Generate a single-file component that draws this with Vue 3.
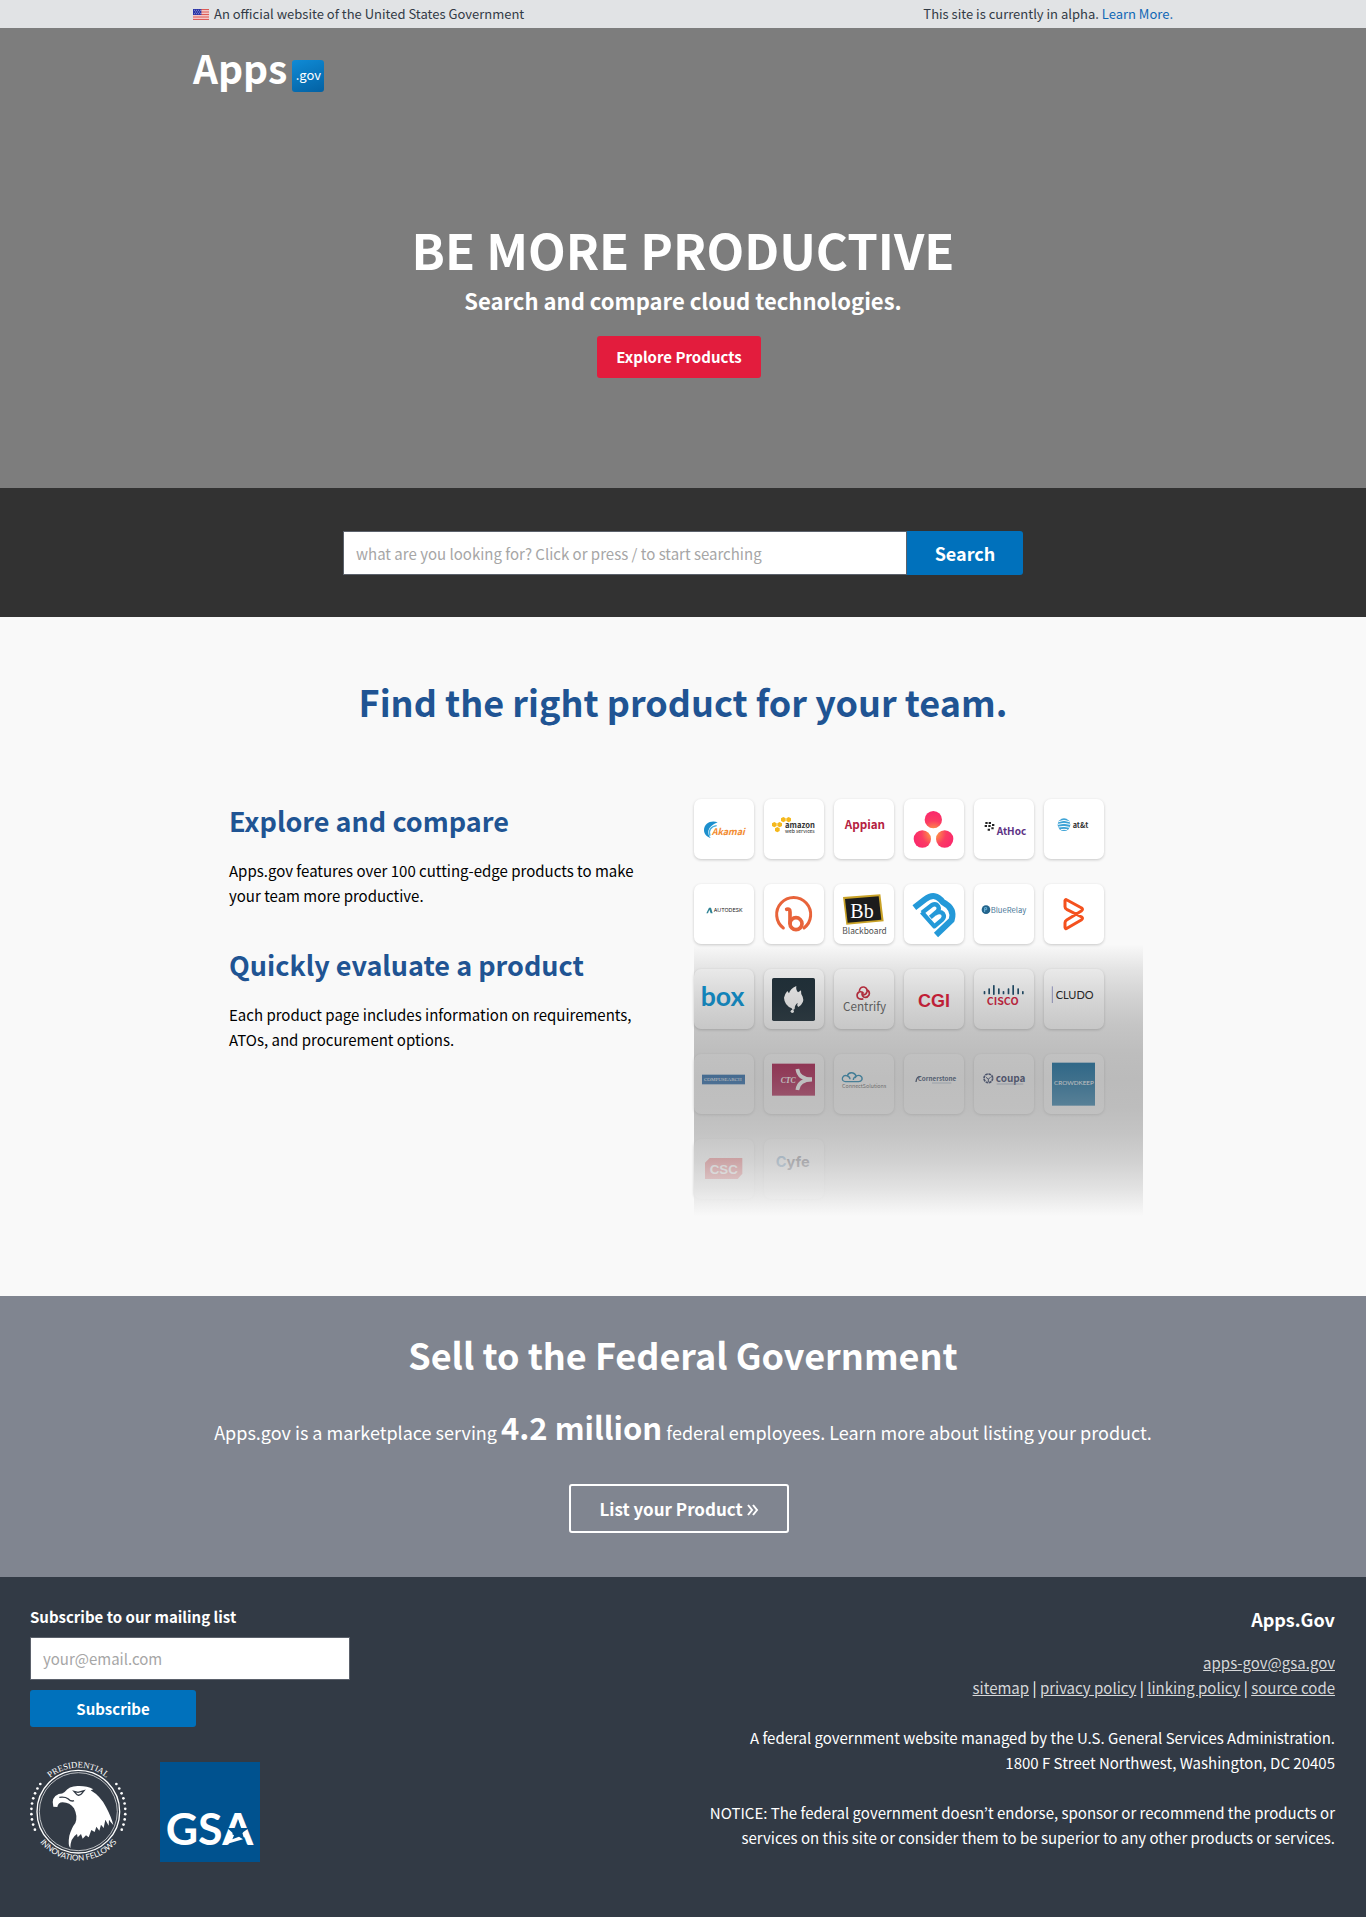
<script setup>
import { ref } from 'vue'

const query = ref('')
const email = ref('')

// Ring of dots on both sides of the fellows seal, in seal units.
const dots = []
for (const side of [-1, 1]) {
  for (let i = 0; i < 10; i++) {
    const a = ((-36 + i * 6.5) * Math.PI) / 180
    dots.push({ x: 235 + side * 141 * Math.cos(a), y: 665 + 141 * Math.sin(a) })
  }
}
const ciscoBars = [
  [31, 66, 10], [45, 58, 18], [59, 48, 30], [74, 58, 18], [88, 66, 10],
  [103, 58, 18], [117, 48, 30], [132, 58, 18], [146, 66, 10],
]
</script>

<template>
  <div class="page">
    <div class="banner">
      <div class="wrap banner-row">
        <span class="official">
          <svg class="flag" viewBox="0 0 48 33" aria-hidden="true">
            <rect width="48" height="33" fill="#fff" />
            <path d="M0 1.5h48M0 6.5h48M0 11.5h48M0 16.5h48M0 21.5h48M0 26.5h48M0 31.5h48" stroke="#d8423c" stroke-width="2.6" />
            <rect width="25" height="18" fill="#2b36a8" />
            <path d="M3 4h20M6 9h17M3 14h20" stroke="#fff" stroke-width="2" stroke-dasharray="2 4" />
          </svg>
          An official website of the United States Government
        </span>
        <span>This site is currently in alpha. <a href="#learn">Learn More.</a></span>
      </div>
    </div>

    <header class="hero">
      <div class="wrap">
        <a class="logo" href="#home">Apps<span class="gov">.gov</span></a>
      </div>
      <h1>BE MORE PRODUCTIVE</h1>
      <p class="tagline">Search and compare cloud technologies.</p>
      <a class="btn-red" href="#products">Explore Products</a>
    </header>

    <section class="search">
      <form class="search-form" @submit.prevent>
        <input v-model="query" type="text" aria-label="Search products" placeholder="what are you looking for? Click or press / to start searching">
        <button type="submit">Search</button>
      </form>
    </section>

    <main class="find">
      <h2>Find the right product for your team.</h2>
      <div class="columns">
        <div class="copy">
          <h3>Explore and compare</h3>
          <p>Apps.gov features over 100 cutting-edge products to make your team more productive.</p>
          <h3>Quickly evaluate a product</h3>
          <p>Each product page includes information on requirements, ATOs, and procurement options.</p>
        </div>
        <div class="showcase">
          <ul class="tiles">
            <li>
              <svg viewBox="0 0 180 180">
                <path d="M71 70C53 62 30 72 30 93c0 12 8 20 20 24C38 104 38 84 71 70Z" fill="#1c8fcd" />
                <path d="M68 80c-18 2-26 16-20 30" fill="none" stroke="#45b0e0" stroke-width="4" />
                <text x="53" y="109" font-size="27" font-weight="700" font-style="italic" fill="#f28b30">Akamai</text>
              </svg>
            </li>
            <li>
              <svg viewBox="0 0 180 180">
                <g fill="#f5b81c">
                  <path d="m58 54 7 4v8l-7 4-7-4v-8ZM74 54l7 4v8l-7 4-7-4v-8ZM31 69l7 4v8l-7 4-7-4v-8ZM47 69l7 4v8l-7 4-7-4v-8ZM40 84l7 4v8l-7 4-7-4v-8Z" />
                </g>
                <text x="63" y="86" font-size="23" font-weight="700" fill="#333">amazon</text>
                <text x="63" y="101" font-size="15" fill="#222">web services</text>
              </svg>
            </li>
            <li>
              <svg viewBox="0 0 180 180">
                <text x="32" y="91" font-size="35" font-weight="700" fill="#b5213f">Appian</text>
              </svg>
            </li>
            <li>
              <svg viewBox="0 0 180 180">
                <defs>
                  <radialGradient id="asana" gradientUnits="userSpaceOnUse" cx="89" cy="102" r="62">
                    <stop offset="0" stop-color="#ffb03a" /><stop offset=".6" stop-color="#fb3b63" /><stop offset="1" stop-color="#fa2a6b" />
                  </radialGradient>
                </defs>
                <g fill="url(#asana)"><circle cx="88" cy="62" r="26" /><circle cx="55" cy="120" r="26" /><circle cx="122" cy="120" r="26" /></g>
              </svg>
            </li>
            <li>
              <svg viewBox="0 0 180 180">
                <path d="M34 72h7M44 72h7M32 81h7M43 81h7M54 78h7M41 92h7M52 88h7" stroke="#222" stroke-width="6" />
                <text x="68" y="109" font-size="30" font-weight="700" fill="#5d3385">AtHoc</text>
              </svg>
            </li>
            <li>
              <svg viewBox="0 0 180 180">
                <circle cx="60" cy="77" r="19" fill="#3ea3d6" />
                <path d="M44 68q16-8 32 0M42 76q18-6 36 0M43 84q17-4 34 1M50 92q10-2 20 0" fill="none" stroke="#fff" stroke-width="3" />
                <text x="86" y="86" font-size="22" font-weight="700" fill="#333">at&amp;t</text>
              </svg>
            </li>

            <li>
              <svg viewBox="0 0 180 180">
                <path d="m37 88 8-17h6l5 17h-6l-4-11-4 11Z" fill="#2f8294" />
                <text class="inter" x="59" y="84" font-size="16" fill="#222">AUTODESK</text>
              </svg>
            </li>
            <li>
              <svg viewBox="0 0 180 180" fill="none" stroke="#e8633a" stroke-linecap="round">
                <path d="M58 132a51 51 0 1 1 62 0" stroke-width="9" />
                <path d="M68 76q10-3 10 8v34" stroke-width="11" />
                <circle cx="96" cy="119" r="18" stroke-width="11" />
              </svg>
            </li>
            <li>
              <svg viewBox="0 0 180 180">
                <path d="m27 39 112-8 10 81-112 10Z" fill="#c9a227" />
                <path d="m33 45 101-8 8 70-101 9Z" fill="#1c1c1c" />
                <text class="serif" x="49" y="102" font-size="60" fill="#fff">Bb</text>
                <text x="25" y="151" font-size="25" fill="#4d4d4d">Blackboard</text>
              </svg>
            </li>
            <li>
              <svg viewBox="0 0 180 180" fill="none" stroke="#2499d8" stroke-width="18" stroke-linejoin="round">
                <path d="M31 71 63 46Q94 23 116 54Q154 74 143 108L96 153" />
                <path d="m54 86 30-23q12-6 19 5 4 8-4 15l-20 17m14-11q16-10 24 0 6 9-2 18l-24 20-38-43" stroke-width="13" />
              </svg>
            </li>
            <li>
              <svg viewBox="0 0 180 180">
                <circle cx="36" cy="77" r="13" fill="#23648c" /><path d="M32 84V71h6v6h-6" fill="none" stroke="#6bb4d8" stroke-width="3" />
                <text x="50" y="86" font-size="23" fill="#4b7898">BlueRelay</text>
              </svg>
            </li>
            <li>
              <svg viewBox="0 0 180 180" fill="none" stroke="#f4511e" stroke-width="9" stroke-linejoin="round">
                <path d="M63 50q1-5 6-2l44 24q5 4 0 8L68 108q-5 3-5 8v14q1 6 6 3l44-26q5-4 0-8L68 76q-5-3-5-8Z" />
              </svg>
            </li>

            <li>
              <svg viewBox="0 0 180 180">
                <text class="lato" x="20" y="111" font-size="80" font-weight="700" fill="#0b96d8">box</text>
              </svg>
            </li>
            <li>
              <svg viewBox="0 0 180 180">
                <rect x="24" y="27" width="129" height="129" rx="5" fill="#1f303a" />
                <path d="M97 51q-2 12 5 19 8-4 9-6-1 11 5 19 7 18-13 31-6-5-1-12-10 4-10 18l-6 4-3-6q-22-10-23-32 1-9 10-20l5 7Q78 60 97 51Z" fill="#fff" />
                <circle cx="85" cy="127" r="5" fill="#fff" />
              </svg>
            </li>
            <li>
              <svg viewBox="0 0 180 180">
                <g fill="none" stroke="#cb2b3e" stroke-width="5">
                  <path d="M76 66q2-13 14-12 10 2 9 14-2 10-12 10M99 62q10 6 6 16-6 10-16 6-8-6-3-15M88 89q-10 4-17-3-5-11 4-17 10-3 14 5" />
                </g>
                <text x="27" y="125" font-size="35" fill="#666">Centrify</text>
              </svg>
            </li>
            <li>
              <svg viewBox="0 0 180 180">
                <text class="sans" x="42" y="113" font-size="54" font-weight="700" fill="#e31937">CGI</text>
              </svg>
            </li>
            <li>
              <svg viewBox="0 0 180 180">
                <rect v-for="b in ciscoBars" :key="b[0]" :x="b[0] - 2" :y="b[1]" width="5" :height="b[2]" rx="2" fill="#1b4a68" />
                <text x="38" y="108" font-size="32" font-weight="700" fill="#d81e3f">CISCO</text>
              </svg>
            </li>
            <li>
              <svg viewBox="0 0 180 180">
                <path d="M25 52v50" stroke="#6a6fb5" stroke-width="2" />
                <text class="lato" x="35" y="89" font-size="33" fill="#222">CLUDO</text>
              </svg>
            </li>

            <li>
              <svg viewBox="0 0 180 180">
                <rect x="24" y="62" width="129" height="29" fill="#145da6" />
                <text class="serif" x="30" y="82" font-size="15" fill="#fff">COMPUSEARCH</text>
              </svg>
            </li>
            <li>
              <svg viewBox="0 0 180 180">
                <rect x="24" y="29" width="129" height="96" fill="#a8083f" />
                <text class="serif" x="50" y="87" font-size="23" font-weight="700" font-style="italic" fill="#fff">CTC</text>
                <path d="M100 45q4 31 44 31M100 108q4-31 44-31" fill="none" stroke="#fff" stroke-width="11" />
              </svg>
            </li>
            <li>
              <svg viewBox="0 0 180 180">
                <path d="M34 83q-12-2-8-13 5-8 14-4 3-12 17-9 9 3 9 11 4-6 12-3 8 4 6 12-3 6-10 6ZM40 66q8 2 8 10M66 68q-8 2-8 10" fill="none" stroke="#0f7fb0" stroke-width="4" />
                <text x="24" y="101" font-size="16" fill="#555">ConnectSolutions</text>
              </svg>
            </li>
            <li>
              <svg viewBox="0 0 180 180">
                <path d="M36 84q2-18 14-16" fill="none" stroke="#1f3355" stroke-width="4" />
                <text x="41" y="81" font-size="19" font-weight="700" fill="#2a3f66">Cornerstone</text>
                <path d="M84 87h58" stroke="#8fa3bb" stroke-width="2" />
              </svg>
            </li>
            <li>
              <svg viewBox="0 0 180 180">
                <circle cx="43" cy="73" r="13" fill="none" stroke="#1f2f5c" stroke-width="5" stroke-dasharray="8 2" />
                <path d="m36 70 7 5 7-5m-7 5v9" fill="none" stroke="#1f2f5c" stroke-width="3" />
                <text x="65" y="84" font-size="30" font-weight="700" fill="#1f2f5c">coupa</text>
                <path d="M68 90h80" stroke="#7d90ad" stroke-width="2" />
              </svg>
            </li>
            <li>
              <svg viewBox="0 0 180 180">
                <rect x="24" y="26" width="129" height="129" fill="#00639b" />
                <text class="lato" x="30" y="94" font-size="19" fill="#fff">CROWDKEEP</text>
              </svg>
            </li>

            <li>
              <svg viewBox="0 0 180 180">
                <path d="M47 57h98v47l-14 16H33V71Z" fill="#e01b22" />
                <text class="sans" x="47" y="104" font-size="40" font-weight="700" fill="#fff">CSC</text>
              </svg>
            </li>
            <li>
              <svg viewBox="0 0 180 180">
                <text class="inter" x="35" y="85" font-size="44" font-weight="700" fill="#334"><tspan fill="#4a86b8">C</tspan>yfe</text>
              </svg>
            </li>
          </ul>
          <div class="fade" />
        </div>
      </div>
    </main>

    <section class="sell">
      <h2>Sell to the Federal Government</h2>
      <p>Apps.gov is a marketplace serving <strong>4.2 million</strong> federal employees. Learn more about listing your product.</p>
      <a class="btn-outline" href="#list">List your Product
        <svg viewBox="0 0 12 12" aria-hidden="true"><path d="m1 1 4 5-4 5M6 1l4 5-4 5" fill="none" stroke="#fff" stroke-width="2" /></svg>
      </a>
    </section>

    <footer class="footer">
      <div class="left">
        <form @submit.prevent>
          <label for="email">Subscribe to our mailing list</label>
          <input id="email" v-model="email" type="email" placeholder="your@email.com">
          <button type="submit">Subscribe</button>
        </form>
        <div class="seals">
          <svg viewBox="90 516 300 300" role="img" aria-label="Presidential Innovation Fellows">
            <defs>
              <path id="arc-top" d="M103 665a132 132 0 0 1 264 0" />
              <path id="arc-bottom" d="M88 665a147 147 0 0 0 294 0" />
            </defs>
            <circle cx="235" cy="665" r="124" fill="none" stroke="#fff" stroke-width="4" />
            <circle cx="235" cy="665" r="117" fill="none" stroke="#fff" stroke-width="2" />
            <circle v-for="(d, i) in dots" :key="i" :cx="d.x" :cy="d.y" r="4" fill="#fff" />
            <text class="serif" font-size="26" fill="#fff" text-anchor="middle"><textPath href="#arc-top" startOffset="50%">PRESIDENTIAL</textPath></text>
            <text class="lato" font-size="24" fill="#fff" text-anchor="middle"><textPath href="#arc-bottom" startOffset="50%">INNOVATION FELLOWS</textPath></text>
            <path d="M160 650q-8-28 16-38 12 0 18-6 14-20 44-18 24 0 42 10l-8 3q30 18 46 50 16 30 22 54-8-8-13-16l-1 18-10-18-5 25-8-10-5 18-9-12-5 16-10-6-8 22-8-6-10 10-5-14-10 10-2-10q-20 12-20 43-8-10-3-38 7-24 18-38 8-20-4-44-12-18-34-18-14 0-16 14Z" fill="#fff" />
            <path d="m222 604 12 3 18-5-8 10q-10 8-16-1ZM178 622q18-2 26 4 10 10 18 6" fill="none" stroke="#323a45" stroke-width="4" />
          </svg>
          <svg viewBox="480 516 300 300" role="img" aria-label="GSA">
            <rect x="480" y="516" width="300" height="300" fill="#00528f" />
            <text class="lato" x="497" y="766" font-size="134" font-weight="700" fill="#fff">GS</text>
            <text class="lato" x="667" y="766" font-size="134" font-weight="700" fill="#fff">A</text>
            <path d="m715 690 7 24h25l-20 14 8 28-20-14-26 14 9-27-16-15h25Z" fill="#00528f" />
            <path d="m680 762 12-32 10 6-5 12 20-8 12 8Z" fill="#fff" />
          </svg>
        </div>
      </div>
      <div class="right">
        <h4>Apps.Gov</h4>
        <p class="links">
          <a href="mailto:apps-gov@gsa.gov">apps-gov@gsa.gov</a><br>
          <a href="#sitemap">sitemap</a> | <a href="#privacy">privacy policy</a> | <a href="#linking">linking policy</a> | <a href="#source">source code</a>
        </p>
        <p>A federal government website managed by the U.S. General Services Administration.<br>1800 F Street Northwest, Washington, DC 20405</p>
        <p>NOTICE: The federal government doesn’t endorse, sponsor or recommend the products or services on this site or consider them to be superior to any other products or services.</p>
      </div>
    </footer>
  </div>
</template>

<style>
body {
  margin: 0;
}
</style>

<style scoped>
.page,
.page input,
.page button {
  font-family: "Noto Sans CJK KR", "Noto Sans", sans-serif;
  font-size: 15px;
}
.page {
  line-height: 25px;
  color: #000;
}
h1, h2, h3, h4, p, ul {
  margin: 0;
  padding: 0;
}
input, button {
  box-sizing: border-box;
  margin: 0;
}
input {
  border: 1px solid #5b616b;
  padding: 0 12px;
  background: #fff;
  border-radius: 0;
}
input::placeholder {
  color: #a6a6a6;
  opacity: 1;
}
button {
  border: 0;
  background: #0071bc;
  color: #fff;
  font-weight: 700;
}
.wrap {
  max-width: 980px;
  margin: 0 auto;
}
.banner {
  background: #e1e3e5;
  color: #323a45;
  font-size: 13px;
  line-height: 28px;
}
.banner-row {
  display: flex;
  justify-content: space-between;
}
.official {
  display: flex;
  align-items: center;
  gap: 5px;
}
.flag {
  width: 16px;
  height: 11px;
}
.banner a {
  color: #0f67b5;
  text-decoration: none;
}

.hero {
  background: #7d7d7d;
  color: #fff;
  text-align: center;
  padding: 13px 0 110px;
}
.logo {
  display: flex;
  align-items: center;
  gap: 5px;
  font-size: 39px;
  font-weight: 700;
  line-height: 48px;
  color: #fff;
  text-decoration: none;
}
.gov {
  width: 32px;
  height: 32px;
  margin-top: 19px;
  border-radius: 3px;
  background: linear-gradient(160deg, #0f8bd6, #0361a3);
  font-size: 13px;
  font-weight: 400;
  line-height: 29px;
  text-align: center;
}
h1 {
  margin-top: 127px;
  font-size: 49px;
  line-height: 60px;
}
.tagline {
  margin-top: 4px;
  font-size: 22px;
  font-weight: 700;
  line-height: 34px;
}
.btn-red {
  display: inline-block;
  margin: 19px 8px 0 0;
  padding: 0 19px;
  border-radius: 3px;
  background: #e31c3d;
  color: #fff;
  font-weight: 700;
  line-height: 42px;
  text-decoration: none;
  vertical-align: top;
}

.search {
  background: #323232;
  padding: 43px 20px 42px;
}
.search-form {
  display: flex;
  max-width: 680px;
  height: 44px;
  margin: 0 auto;
}
.search-form input {
  flex: 1;
}
.page .search-form button {
  width: 116px;
  border-radius: 0 3px 3px 0;
  font-size: 18px;
}

.find {
  background: #f9f9f9;
  padding: 59px 20px 80px;
}
h2 {
  text-align: center;
  font-size: 36px;
  line-height: 50px;
}
.find h2,
h3 {
  color: #205493;
}
.columns {
  display: grid;
  grid-template-columns: 440fr 449fr;
  gap: 25px;
  max-width: 914px;
  margin: 73px auto 0;
  padding-left: 6px;
}
.copy {
  padding-right: 12px;
}
h3 {
  margin: 37px 0 17px;
  font-size: 27px;
  line-height: 40px;
}
.copy h3:first-child {
  margin-top: 2px;
}
.showcase {
  position: relative;
  padding-bottom: 17px;
}
.tiles {
  display: grid;
  grid-template-columns: repeat(6, 60px);
  gap: 25px 10px;
  list-style: none;
}
.tiles li {
  height: 60px;
  border-radius: 7px;
  background: #fff;
  box-shadow: 0 1px 3px rgba(0, 0, 0, 0.2);
}
.tiles svg {
  display: block;
  width: 60px;
  height: 60px;
}
.sans {
  font-family: "Liberation Sans", sans-serif;
}
.serif {
  font-family: "Liberation Serif", serif;
}
.lato {
  font-family: Lato, sans-serif;
}
.inter {
  font-family: Inter, sans-serif;
}
.fade {
  position: absolute;
  inset: 145px 0 0;
  background: linear-gradient(
    rgba(0, 0, 0, 0),
    rgba(25, 25, 25, 0.1) 10%,
    rgba(50, 50, 50, 0.2) 20%,
    rgba(75, 75, 75, 0.3) 30%,
    rgba(100, 100, 100, 0.4) 40%,
    rgba(125, 125, 125, 0.5) 50%,
    rgba(149, 149, 149, 0.6) 60%,
    rgba(174, 174, 174, 0.7) 70%,
    rgba(199, 199, 199, 0.8) 80%,
    rgba(224, 224, 224, 0.9) 90%,
    #f9f9f9
  );
}

.sell {
  background: #808590;
  color: #fff;
  text-align: center;
  padding: 33px 20px 44px;
}
.sell p {
  margin: 28px 0 27px;
  font-size: 18px;
  line-height: 50px;
}
.sell strong {
  font-size: 31px;
  line-height: 0;
}
.btn-outline {
  display: inline-block;
  margin-right: 8px;
  padding: 0 28px;
  border: 2px solid #fff;
  border-radius: 3px;
  color: #fff;
  font-size: 17px;
  font-weight: 700;
  line-height: 45px;
  text-decoration: none;
  vertical-align: top;
}
.btn-outline svg {
  width: 12px;
  height: 12px;
}

.footer {
  display: flex;
  justify-content: space-between;
  gap: 30px;
  background: #323a45;
  color: #fff;
  padding: 28px 31px 55px 30px;
}
.left {
  width: 320px;
}
label {
  display: block;
  font-weight: 700;
  line-height: 24px;
}
.left input {
  display: block;
  width: 100%;
  height: 43px;
  margin: 8px 0 10px;
}
.left button {
  display: block;
  width: 166px;
  height: 37px;
  border-radius: 3px;
}
.seals {
  display: flex;
  gap: 30px;
  margin-top: 35px;
}
.seals svg {
  width: 100px;
  height: 100px;
  overflow: visible;
}
.right {
  max-width: 652px;
  text-align: right;
}
h4 {
  margin: 1px 0 18px;
  font-size: 18px;
  line-height: 26px;
}
.right p + p {
  margin-top: 25px;
}
.links a {
  color: #d6d7d9;
}
</style>
